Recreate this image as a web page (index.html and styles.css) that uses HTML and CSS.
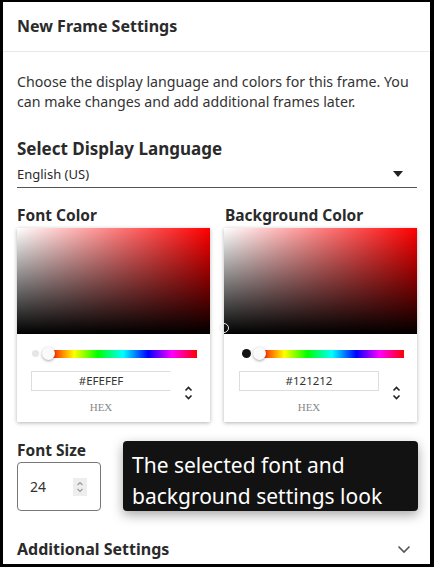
FILE: index.html
```html
<!DOCTYPE html>
<html>
<head>
<meta charset="utf-8">
<link rel="stylesheet" href="styles.css">
</head>
<body>
<div class="frame">
  <div class="header">New Frame Settings</div>
  <div class="content">
    <p class="desc">Choose the display language and colors for this frame. You can make changes and add additional frames later.</p>
    <div class="label lang-label">Select Display Language</div>
    <div class="select">
      <span>English (US)</span>
      <svg class="caret" width="10" height="6" viewBox="0 0 10 6"><path d="M0 0h10L5 6z" fill="#222"/></svg>
    </div>
    <div class="colors">
      <div class="col">
        <div class="label">Font Color</div>
        <div class="card">
          <div class="grad"></div>
          <div class="card-body">
            <div class="slider-row">
              <span class="swatch light"></span>
              <div class="hue"><span class="thumb"></span></div>
            </div>
            <div class="hex-row">
              <div class="hex-col">
                <div class="hex-input open">#EFEFEF</div>
                <div class="hex-label">HEX</div>
              </div>
              <div class="arrows">
                <svg width="9" height="16" viewBox="0 0 9 16"><path d="M1.5 5.5L4.5 2.5L7.5 5.5M1.5 10.5L4.5 13.5L7.5 10.5" fill="none" stroke="#222" stroke-width="1.6"/></svg>
              </div>
            </div>
          </div>
        </div>
      </div>
      <div class="col">
        <div class="label">Background Color</div>
        <div class="card">
          <div class="grad"><span class="picker"></span></div>
          <div class="card-body">
            <div class="slider-row">
              <span class="swatch dark"></span>
              <div class="hue"><span class="thumb"></span></div>
            </div>
            <div class="hex-row">
              <div class="hex-col">
                <div class="hex-input">#121212</div>
                <div class="hex-label">HEX</div>
              </div>
              <div class="arrows">
                <svg width="9" height="16" viewBox="0 0 9 16"><path d="M1.5 5.5L4.5 2.5L7.5 5.5M1.5 10.5L4.5 13.5L7.5 10.5" fill="none" stroke="#222" stroke-width="1.6"/></svg>
              </div>
            </div>
          </div>
        </div>
      </div>
    </div>
    <div class="size-row">
      <div class="size-col">
        <div class="label">Font Size</div>
        <div class="size-input">
          <span>24</span>
          <span class="spin">
            <svg width="8" height="14" viewBox="0 0 8 14"><path d="M1.5 5L4 2.5L6.5 5M1.5 9L4 11.5L6.5 9" fill="none" stroke="#999" stroke-width="1.1"/></svg>
          </span>
        </div>
      </div>
      <div class="tooltip">The selected font and background settings look</div>
    </div>
    <div class="additional">
      <span class="label">Additional Settings</span>
      <svg width="14" height="9" viewBox="0 0 14 9"><path d="M1.5 1.5L7 7L12.5 1.5" fill="none" stroke="#555" stroke-width="1.6"/></svg>
    </div>
  </div>
</div>
</body>
</html>
```

FILE: styles.css
```css
html, body {
  margin: 0;
  padding: 0;
  background: #000;
}
body {
  width: 434px;
  height: 567px;
  overflow: hidden;
  font-family: "Noto Sans", "Open Sans", sans-serif;
  color: #222;
}
.frame {
  margin: 2px 4px 0 3px;
  height: 562px;
  background: #fff;
  overflow: hidden;
}
.header {
  height: 49px;
  line-height: 49px;
  padding-left: 14px;
  font-weight: 700;
  font-size: 16px;
  color: #2a2a2a;
  border-bottom: 1px solid #e8e8e8;
}
.content {
  padding: 0 13px 0 14px;
}
.desc {
  margin: 20px 0 0;
  font-size: 14.2px;
  line-height: 20px;
  color: #333;
}
.label {
  font-weight: 700;
  font-size: 15.5px;
  line-height: 20px;
  color: #2a2a2a;
}
.lang-label {
  margin-top: 27px;
  font-size: 17px;
}
.select {
  margin-top: 5px;
  display: flex;
  align-items: center;
  justify-content: space-between;
  line-height: 20px;
  padding-bottom: 3px;
  font-size: 13px;
  color: #2a2a2a;
  border-bottom: 1px solid #555;
}
.caret {
  margin-right: 14px;
}
.colors {
  margin-top: 17px;
  display: flex;
  gap: 14px;
}
.col {
  width: 193px;
}
.col + .col .label {
  padding-left: 1px;
}
.card {
  margin-top: 3px;
  background: #fff;
  box-shadow: 0 1px 4px rgba(0,0,0,0.3);
}
.grad {
  position: relative;
  height: 106px;
  background: linear-gradient(to bottom, rgba(0,0,0,0), #000), linear-gradient(to right, #fff, #f00);
}
.picker {
  position: absolute;
  left: -5px;
  bottom: 1px;
  width: 8px;
  height: 8px;
  border: 1px solid #eee;
  border-radius: 50%;
}
.card-body {
  padding: 13px 13px 8px 14px;
}
.slider-row {
  display: flex;
  align-items: center;
  height: 13px;
}
.swatch {
  width: 7px;
  height: 7px;
  border-radius: 50%;
  margin-left: 1px;
  margin-right: 10px;
}
.swatch.light {
  background: #e6e6e6;
}
.swatch.dark {
  background: #121212;
  width: 9px;
  height: 9px;
  margin-left: 4px;
  margin-right: 9px;
}
.hue {
  position: relative;
  flex: 1;
  height: 8px;
  background: linear-gradient(to right, #f00 0%, #ff0 17%, #0f0 33%, #0ff 50%, #00f 67%, #f0f 83%, #f00 100%);
}
.thumb {
  position: absolute;
  left: -7px;
  top: -3px;
  width: 13px;
  height: 13px;
  border-radius: 50%;
  background: #fafafa;
  box-shadow: 0 1px 3px rgba(0,0,0,0.35);
}
.hex-row {
  margin-top: 11px;
  display: flex;
}
.hex-col {
  width: 140px;
}
.col + .col .hex-col {
  margin-left: 1px;
}
.hex-input {
  height: 18px;
  line-height: 18px;
  border: 1px solid #ddd;
  text-align: center;
  font-size: 11.5px;
  color: #333;
}
.hex-input.open {
  border-right-color: #fff;
}
.hex-label {
  margin-top: 9px;
  line-height: 14px;
  text-align: center;
  font-family: "Liberation Serif", "DejaVu Serif", serif;
  font-size: 11px;
  color: #888;
}
.arrows {
  padding-top: 13px;
  margin-left: 13px;
}
.size-row {
  position: relative;
  margin-top: 18px;
}
.size-input {
  margin-top: 2px;
  width: 82px;
  height: 47px;
  border: 1px solid #777;
  border-radius: 4px;
  display: flex;
  align-items: center;
  font-size: 14px;
  color: #333;
}
.size-input span:first-child {
  margin-left: 12px;
  flex: 1;
}
.spin {
  width: 14px;
  height: 18px;
  margin-right: 13px;
  background: #eee;
  display: flex;
  align-items: center;
  justify-content: center;
}
.tooltip {
  position: absolute;
  left: 106px;
  top: 1px;
  box-sizing: border-box;
  width: 295px;
  height: 70px;
  padding: 9px 0 0 9px;
  background: #121212;
  color: #fff;
  border-radius: 4px;
  font-size: 21px;
  line-height: 31px;
  box-shadow: 0 4px 12px rgba(0,0,0,0.35);
  overflow: hidden;
}
.additional {
  margin-top: 28px;
  display: flex;
  align-items: center;
  justify-content: space-between;
}
.additional .label {
  font-size: 16px;
}
.additional svg {
  margin-right: 6px;
}
```
